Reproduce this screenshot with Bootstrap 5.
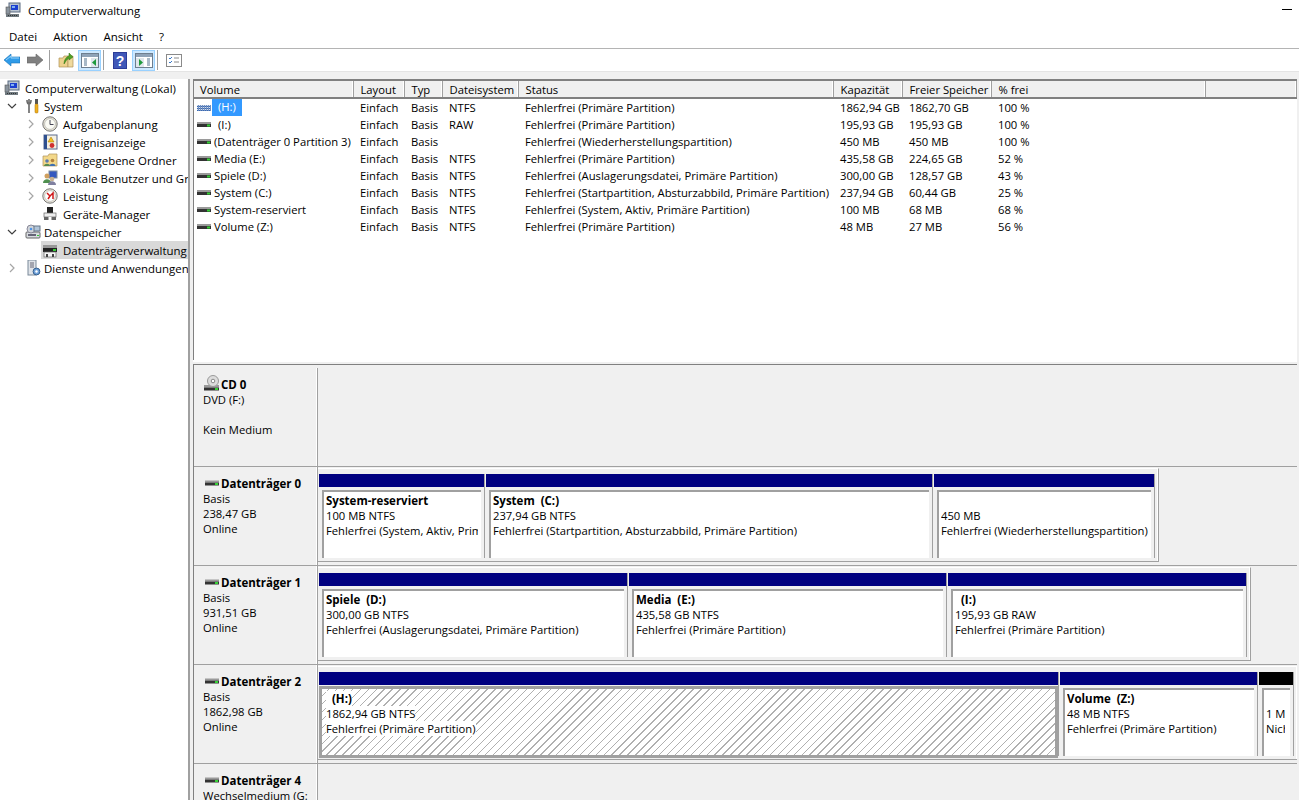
<!DOCTYPE html>
<html lang="de">
<head>
<meta charset="utf-8">
<title>Computerverwaltung</title>
<link href="https://cdn.jsdelivr.net/npm/bootstrap@5.3.0/dist/css/bootstrap.min.css" rel="stylesheet">
<style>
html,body{height:800px;overflow:hidden;background:#fff}
body{font-family:"Open Sans","Noto Sans",sans-serif;font-size:11.25px;line-height:15px;color:#000}
.mmc-title{height:22px;padding:0 7px 2px 5px;font-size:11.35px}
.mmc-title .ttl{margin-left:7px}
.mmc-min{width:10px;height:1px;background:#000;margin-top:-1px}
.mmc-menu{height:27px;border-bottom:1px solid #b4b4b4;padding-left:9px;padding-top:2px;gap:16px;font-size:11.5px}
.mmc-tools{height:22px;padding-left:4px}
.tb{width:16px;height:16px;display:block;flex:none}
.tb-on{width:23px;height:21px;flex:none;background:#cce8ff;border:1px solid #99d1ff;display:flex;align-items:center;justify-content:center}
.tb-sep{width:1px;height:20px;flex:none;background:#a0a0a0}
.g7{margin-left:7px}.g6{margin-left:6px}.g8{margin-left:8px}.g4{margin-left:4px}.g2{margin-left:2px}.g9{margin-left:9px}.g5{margin-left:5px}
.mmc-main{height:729px;background:#f0f0f0;padding-top:7px;border-top:1px solid #e4e4e4}
.tree{width:188px;flex:none;height:722px;background:#fff;overflow:hidden;font-size:11.45px}
.tree-wrap{width:190px;flex:none;border-right:2px solid #a0a0a0;margin-right:3px}
.tr{height:18px;white-space:nowrap}
.tr .chev{width:10px;height:10px;flex:none}
.l0{padding-left:4px}.l0 .tico{margin-right:5px}
.l1{padding-left:7px}.l1 .chev{margin-right:2px}.l1 .tico{margin-right:3px;margin-left:6px}
.l2{padding-left:26px}.l2 .chev{margin-right:6px}.l2 .tico{margin-right:5px}
.tico{width:16px;height:16px;flex:none}
.tsel{background:#d9d9d9;margin-left:41px;padding-left:1px}
.tsel .tico{margin-right:5px}
.rpane{width:1104px;flex:none}
.vol-pane{height:281px;background:#fff;border-top:2px solid #808080;border-left:1px solid #808080;overflow:hidden}
.vol-table{table-layout:fixed;width:1103px;border-collapse:collapse}
.vol-table th{font-weight:400;background:#f0f0f0;height:17px;padding:0 0 0 7px;border-right:1px solid #a0a0a0;box-shadow:inset -1px 0 0 #fff;border-bottom:2px solid #808080;white-space:nowrap}
.vol-table th:first-child{padding-left:6px}
.vol-table td{height:17px;padding:0 0 0 7px;white-space:nowrap;overflow:hidden}
.vol-table td.vn{padding-left:3px}
.vn-in{display:flex;align-items:center}
.vn-in svg{width:16px;height:11px;flex:none;margin-right:1px}
.hl{background:#3399ff;color:#fff;padding:0 6px;margin-left:-2px;height:17px}
.ind{padding-left:4px}
.split{height:5px;background:#f0f0f0;border-top:2px solid #fff;border-bottom:1px solid #808080}
.disks{height:436px;background:#f0f0f0;border-left:1px solid #808080;overflow:hidden;padding-top:3px}
.drow{height:99px;border-bottom:1px solid #a0a0a0;display:flex}
.dlabel{width:124px;flex:none;padding:8px 0 0 9px;border-right:1px solid #a0a0a0;box-shadow:inset -1px 0 0 #fff;white-space:nowrap}
.dclip{width:105px;overflow:hidden}
.dname{font-weight:700;display:flex;align-items:center;height:14px;margin:1px 0;font-size:11.5px}
.dname svg{width:16px;height:12px;margin-left:2px;flex:none}
.dname svg.dcd{height:16px;margin-top:-3px;margin-right:1px;margin-left:1px}
.strip{display:flex;align-self:flex-start;margin-top:1px;height:94px;padding:5px 3px 3px 1px;border-top:1px solid #fff;border-right:1px solid #a0a0a0;border-bottom:1px solid #a0a0a0;box-shadow:inset -1px 0 0 #fff}
.part{flex:none;margin-right:1px;border-right:1px solid #a0a0a0;display:flex;flex-direction:column}
.part:last-child{margin-right:0}
.pbar{height:13px;background:#000080;flex:none}
.pbar-blk{background:#000}
.pbody{margin:3px 3px 0 3px;height:68px;flex:none;background:#fff;border-top:2px solid #a0a0a0;border-left:2px solid #a0a0a0;padding:1px 0 0 2px;white-space:nowrap}
.pclip{overflow:hidden;margin-right:3px}
.pw35 .pclip{margin-right:5px}
.pclip b{display:block;font-weight:700;font-size:11.5px}
.psel{margin:1px 0 0 0;height:72px;border:3px solid #a0a0a0;padding:2px 0 0 4px;background:repeating-linear-gradient(135deg,#fff 0,#fff 4.6px,#b0b0b0 4.6px,#b0b0b0 5.6px)}
.psel span,.psel b{background:#fff}
.psel b{display:inline-block}
.pline{display:block;width:max-content}
.sp2{height:15px}
.pw166{width:166px}.pw447{width:447px}.pw221{width:221px}
.pw309{width:309px}.pw318{width:318px}.pw299{width:299px}
.pw740{width:740px}.pw198{width:198px}.pw35{width:35px}
</style>
</head>
<body>
<svg width="0" height="0" class="d-block" style="position:absolute">
<defs>
<symbol id="hdd" viewBox="0 0 16 11"><rect x="0" y="3" width="14" height="2" fill="#9a9a9a"/><rect x="0" y="5" width="14" height="3" fill="#333"/><rect x="10" y="5.500" width="3" height="2" fill="#35d135"/></symbol>
<symbol id="hddhatch" viewBox="0 0 16 11"><rect x="0" y="3" width="14" height="6" fill="#6f8fc0"/><path d="M0 3.500h14M0 5.500h14M0 7.500h14" stroke="#fff" stroke-width=".7" stroke-dasharray="1 1"/><path d="M0 4.500h14M0 6.500h14M0 8.500h14" stroke="#2a5db0" stroke-width=".8" stroke-dasharray="1 1"/></symbol>
<symbol id="comp" viewBox="0 0 16 16"><rect x="4" y="1" width="11" height="9" fill="#b9c4d0" stroke="#5a6a80"/><rect x="6" y="3" width="7" height="5" fill="#1c3fd0"/><rect x="7" y="4" width="3" height="2" fill="#7fb0f0"/><rect x="1" y="5" width="4" height="7" fill="#8a949e" stroke="#555" stroke-width=".6"/><rect x="1" y="12" width="13" height="3" fill="#707a80"/><path d="M3 13.500h9" stroke="#333" stroke-dasharray="1 1"/></symbol>
<symbol id="tools" viewBox="0 0 16 16"><path d="M4 1v4M2 2c0 3 1 4 2 4s2-1 2-4M4 6v9" stroke="#666" stroke-width="1.600" fill="none"/><rect x="10" y="1" width="3" height="5" fill="#555"/><rect x="10" y="6" width="3" height="9" rx="1" fill="#f0b020" stroke="#a87000" stroke-width=".5"/></symbol>
<symbol id="clock" viewBox="0 0 16 16"><circle cx="8" cy="8" r="7.200" fill="#e8e4d4" stroke="#777"/><circle cx="8" cy="8" r="5.400" fill="#fbfbf4" stroke="#aaa" stroke-width=".6"/><path d="M8 4v4.500h3.500" stroke="#445" stroke-width="1" fill="none"/></symbol>
<symbol id="evt" viewBox="0 0 16 16"><rect x="2" y="1" width="13" height="14" fill="#f4f0e0" stroke="#5a6a90"/><rect x="2" y="1" width="3" height="14" fill="#2f5090"/><path d="M9 3l3 5H6z" fill="#f4c020" stroke="#a07000" stroke-width=".5"/><circle cx="10" cy="11.500" r="2.400" fill="#d03030"/></symbol>
<symbol id="share" viewBox="0 0 16 16"><path d="M1 4h5l1-2h8v12H1z" fill="#f3d88a" stroke="#b0935a" stroke-width=".7"/><circle cx="5" cy="9" r="1.800" fill="#5a7ab0"/><path d="M2 14c0-3 6-3 6 0z" fill="#5a8a50"/><circle cx="10.500" cy="8.500" r="1.800" fill="#b08040"/><path d="M7.500 14c0-3 6-3 6 0z" fill="#4070b0"/></symbol>
<symbol id="users" viewBox="0 0 16 16"><rect x="7" y="1" width="8" height="7" fill="#3458c0" stroke="#8090a0"/><circle cx="5" cy="6" r="2.500" fill="#d0a060"/><path d="M1 13c0-5 8-5 8 0z" fill="#509050"/><circle cx="10" cy="9" r="2.300" fill="#c8b090"/><path d="M6 15c0-5 8-5 8 0z" fill="#8080a0"/></symbol>
<symbol id="perf" viewBox="0 0 16 16"><circle cx="8" cy="8" r="7.200" fill="#efeadb" stroke="#777"/><circle cx="8" cy="8" r="5.400" fill="#fff" stroke="#aaa" stroke-width=".6"/><path d="M5 5l3 3-2 3M8 8l3-3 0 6" stroke="#d01818" stroke-width="1.500" fill="none"/></symbol>
<symbol id="dev" viewBox="0 0 16 16"><rect x="5" y="1" width="6" height="6" fill="#222"/><rect x="2" y="7" width="12" height="4" fill="#eee" stroke="#666" stroke-width=".7"/><rect x="2" y="11" width="12" height="3" fill="#666"/><rect x="6.500" y="11" width="3" height="3" fill="#fff"/></symbol>
<symbol id="store" viewBox="0 0 16 16"><rect x="1" y="8" width="14" height="6" rx="1" fill="#d8dce0" stroke="#666"/><rect x="3" y="10" width="8" height="2" fill="#667"/><circle cx="6" cy="5" r="4" fill="#d0d4d8" stroke="#889"/><circle cx="6" cy="5" r="1.300" fill="#4e94e8"/><rect x="9" y="2" width="6" height="5" fill="#b0c4d8" stroke="#678"/><rect x="12" y="11" width="2" height="1" fill="#3c3"/></symbol>
<symbol id="svc" viewBox="0 0 16 16"><rect x="3" y="0" width="8" height="15" fill="#dfe3e8" stroke="#7a8a9a"/><path d="M5 3h4M5 5h4M5 7h4" stroke="#667"/><circle cx="11.500" cy="11.500" r="3.400" fill="#6fa0d8" stroke="#35608f"/><circle cx="11.500" cy="11.500" r="1.200" fill="#fff"/></symbol>
<symbol id="dskmgr" viewBox="0 0 16 16"><rect x="1" y="3" width="14" height="3" fill="#999"/><rect x="1" y="6" width="14" height="4" fill="#222"/><rect x="11" y="7" width="3" height="2" fill="#3c3"/><rect x="2" y="10" width="12" height="5" fill="#f4f4f4" stroke="#666" stroke-width=".7"/><rect x="4" y="12" width="2" height="3" fill="#444"/><rect x="10" y="12" width="2" height="3" fill="#444"/></symbol>
<symbol id="cd" viewBox="0 0 16 16"><rect x="0" y="10" width="15" height="2.500" fill="#9a9a9a"/><rect x="0" y="12.500" width="15" height="3" fill="#333"/><rect x="11" y="13" width="3" height="2" fill="#35d135"/><circle cx="9" cy="6" r="5.500" fill="#dcdcdc" stroke="#999"/><circle cx="9" cy="6" r="1.800" fill="#fff" stroke="#888"/></symbol>
<symbol id="chd" viewBox="0 0 10 10"><path d="M1 3l4 4 4-4" stroke="#404040" stroke-width="1.200" fill="none"/></symbol>
<symbol id="chr" viewBox="0 0 10 10"><path d="M3 1l4 4-4 4" stroke="#a6a6a6" stroke-width="1.200" fill="none"/></symbol>
<symbol id="back" viewBox="0 0 16 16"><path d="M0 8l7-6v3h9v6H7v3z" fill="#2f9be8" stroke="#1574bb" stroke-width=".6"/><path d="M2 8l5-4v2h8" fill="none" stroke="#9bd4f8" stroke-width="1"/></symbol>
<symbol id="fwd" viewBox="0 0 16 16"><path d="M16 8L9 2v3H0v6h9v3z" fill="#808080" stroke="#666" stroke-width=".6"/></symbol>
<symbol id="up" viewBox="0 0 16 16"><path d="M1 6h4l1-2h4v11H1z" fill="#edd28d" stroke="#b0935a" stroke-width=".7"/><path d="M10 4h5v11H10z" fill="#f0da9e" stroke="#b0935a" stroke-width=".7"/><path d="M6 12c0-4 2-7 5-8V1l4 4-4 3V6c-2 1-3 3-5 6z" fill="#50a028" stroke="#2f7010" stroke-width=".5"/></symbol>
<symbol id="panel-l" viewBox="0 0 18 15"><rect x=".5" y=".5" width="17" height="14" fill="#fff" stroke="#6d7e8f"/><rect x="1" y="1" width="16" height="3" fill="#8fa3b8"/><path d="M3 6h3M3 8h3M3 10h3M3 12h3" stroke="#53738f"/><rect x="10" y="5" width="7" height="9" fill="#dfe6ec"/><path d="M15 6v7l-4-3.500z" fill="#1e9a3c"/></symbol>
<symbol id="panel-r" viewBox="0 0 18 15"><rect x=".5" y=".5" width="17" height="14" fill="#fff" stroke="#6d7e8f"/><rect x="1" y="1" width="16" height="3" fill="#8fa3b8"/><path d="M12 6h3M12 8h3M12 10h3M12 12h3" stroke="#53738f"/><rect x="1" y="5" width="8" height="9" fill="#dfe6ec"/><path d="M4 6v7l4-3.500z" fill="#1e9a3c"/></symbol>
<symbol id="check" viewBox="0 0 16 13"><rect x=".5" y=".5" width="15" height="12" fill="#fff" stroke="#8a8a8a"/><path d="M3 4l1 1 2-2M3 8l1 1 2-2" stroke="#3a78c8" fill="none"/><path d="M8 4h5M8 8h5" stroke="#8a8a8a"/></symbol>
</defs>
</svg>

<div class="mmc-title d-flex align-items-center">
  <svg class="tico"><use href="#comp"/></svg><span class="ttl flex-grow-1">Computerverwaltung</span><span class="mmc-min"></span>
</div>
<div class="mmc-menu d-flex align-items-center"><span>Datei</span><span>Aktion</span><span>Ansicht</span><span>?</span></div>
<div class="mmc-tools d-flex align-items-center">
  <svg class="tb"><use href="#back"/></svg>
  <svg class="tb g7"><use href="#fwd"/></svg>
  <span class="tb-sep g6"></span>
  <svg class="tb g8"><use href="#up"/></svg>
  <span class="tb-on g4"><svg width="18" height="15"><use href="#panel-l"/></svg></span>
  <span class="tb-sep g2"></span>
  <svg width="14" height="17" class="g9 flex-none" viewBox="0 0 14 17"><rect width="14" height="17" fill="#2c3c98"/><rect x="1" y="1" width="12" height="15" fill="#4058b8"/><text x="7" y="13.500" text-anchor="middle" font-family="Liberation Sans, sans-serif" font-weight="700" font-size="14" fill="#fff">?</text></svg>
  <span class="tb-on g5"><svg width="18" height="15"><use href="#panel-r"/></svg></span>
  <span class="tb-sep g2"></span>
  <svg width="16" height="13" class="g8"><use href="#check"/></svg>
</div>
<div class="mmc-main d-flex">
  <div class="tree-wrap">
    <div class="tree">
      <div class="tr d-flex align-items-center l0"><svg class="tico"><use href="#comp"/></svg>Computerverwaltung (Lokal)</div>
      <div class="tr d-flex align-items-center l1"><svg class="chev"><use href="#chd"/></svg><svg class="tico"><use href="#tools"/></svg>System</div>
      <div class="tr d-flex align-items-center l2"><svg class="chev"><use href="#chr"/></svg><svg class="tico"><use href="#clock"/></svg>Aufgabenplanung</div>
      <div class="tr d-flex align-items-center l2"><svg class="chev"><use href="#chr"/></svg><svg class="tico"><use href="#evt"/></svg>Ereignisanzeige</div>
      <div class="tr d-flex align-items-center l2"><svg class="chev"><use href="#chr"/></svg><svg class="tico"><use href="#share"/></svg>Freigegebene Ordner</div>
      <div class="tr d-flex align-items-center l2"><svg class="chev"><use href="#chr"/></svg><svg class="tico"><use href="#users"/></svg>Lokale Benutzer und Gruppen</div>
      <div class="tr d-flex align-items-center l2"><svg class="chev"><use href="#chr"/></svg><svg class="tico"><use href="#perf"/></svg>Leistung</div>
      <div class="tr d-flex align-items-center l2"><span class="chev"></span><svg class="tico"><use href="#dev"/></svg>Geräte-Manager</div>
      <div class="tr d-flex align-items-center l1"><svg class="chev"><use href="#chd"/></svg><svg class="tico"><use href="#store"/></svg>Datenspeicher</div>
      <div class="tr d-flex align-items-center tsel"><svg class="tico"><use href="#dskmgr"/></svg>Datenträgerverwaltung</div>
      <div class="tr d-flex align-items-center l1"><svg class="chev"><use href="#chr"/></svg><svg class="tico"><use href="#svc"/></svg>Dienste und Anwendungen</div>
    </div>
  </div>
  <div class="rpane">
    <div class="vol-pane">
      <table class="vol-table">
        <colgroup><col style="width:159px"><col style="width:51px"><col style="width:38px"><col style="width:76px"><col style="width:315px"><col style="width:69px"><col style="width:89px"><col style="width:214px"><col></colgroup>
        <thead><tr><th>Volume</th><th>Layout</th><th>Typ</th><th>Dateisystem</th><th>Status</th><th>Kapazität</th><th>Freier Speicher</th><th>% frei</th><th></th></tr></thead>
        <tbody>
        <tr><td class="vn"><span class="vn-in"><svg><use href="#hddhatch"/></svg><span class="hl">(H:)</span></span></td><td>Einfach</td><td>Basis</td><td>NTFS</td><td>Fehlerfrei (Primäre Partition)</td><td>1862,94 GB</td><td>1862,70 GB</td><td>100 %</td><td></td></tr>
        <tr><td class="vn"><span class="vn-in"><svg><use href="#hdd"/></svg><span class="ind">(I:)</span></span></td><td>Einfach</td><td>Basis</td><td>RAW</td><td>Fehlerfrei (Primäre Partition)</td><td>195,93 GB</td><td>195,93 GB</td><td>100 %</td><td></td></tr>
        <tr><td class="vn"><span class="vn-in"><svg><use href="#hdd"/></svg>(Datenträger 0 Partition 3)</span></td><td>Einfach</td><td>Basis</td><td></td><td>Fehlerfrei (Wiederherstellungspartition)</td><td>450 MB</td><td>450 MB</td><td>100 %</td><td></td></tr>
        <tr><td class="vn"><span class="vn-in"><svg><use href="#hdd"/></svg>Media (E:)</span></td><td>Einfach</td><td>Basis</td><td>NTFS</td><td>Fehlerfrei (Primäre Partition)</td><td>435,58 GB</td><td>224,65 GB</td><td>52 %</td><td></td></tr>
        <tr><td class="vn"><span class="vn-in"><svg><use href="#hdd"/></svg>Spiele (D:)</span></td><td>Einfach</td><td>Basis</td><td>NTFS</td><td>Fehlerfrei (Auslagerungsdatei, Primäre Partition)</td><td>300,00 GB</td><td>128,57 GB</td><td>43 %</td><td></td></tr>
        <tr><td class="vn"><span class="vn-in"><svg><use href="#hdd"/></svg>System (C:)</span></td><td>Einfach</td><td>Basis</td><td>NTFS</td><td>Fehlerfrei (Startpartition, Absturzabbild, Primäre Partition)</td><td>237,94 GB</td><td>60,44 GB</td><td>25 %</td><td></td></tr>
        <tr><td class="vn"><span class="vn-in"><svg><use href="#hdd"/></svg>System-reserviert</span></td><td>Einfach</td><td>Basis</td><td>NTFS</td><td>Fehlerfrei (System, Aktiv, Primäre Partition)</td><td>100 MB</td><td>68 MB</td><td>68 %</td><td></td></tr>
        <tr><td class="vn"><span class="vn-in"><svg><use href="#hdd"/></svg>Volume (Z:)</span></td><td>Einfach</td><td>Basis</td><td>NTFS</td><td>Fehlerfrei (Primäre Partition)</td><td>48 MB</td><td>27 MB</td><td>56 %</td><td></td></tr>
        </tbody>
      </table>
    </div>
    <div class="split"></div>
    <div class="disks">
      <div class="drow">
        <div class="dlabel"><div class="dname"><svg class="dcd" viewBox="0 0 16 16"><use href="#cd"/></svg>CD 0</div><div>DVD (F:)</div><div class="sp2"></div><div>Kein Medium</div></div>
      </div>
      <div class="drow">
        <div class="dlabel"><div class="dname"><svg><use href="#hdd"/></svg>Datenträger 0</div><div>Basis</div><div>238,47 GB</div><div>Online</div></div>
        <div class="strip">
          <div class="part pw166"><div class="pbar"></div><div class="pbody"><div class="pclip"><b>System-reserviert</b>100 MB NTFS<br>Fehlerfrei (System, Aktiv, Primäre Partition)</div></div></div>
          <div class="part pw447"><div class="pbar"></div><div class="pbody"><div class="pclip"><b>System&nbsp; (C:)</b>237,94 GB NTFS<br>Fehlerfrei (Startpartition, Absturzabbild, Primäre Partition)</div></div></div>
          <div class="part pw221"><div class="pbar"></div><div class="pbody"><div class="pclip"><b>&nbsp;</b>450 MB<br>Fehlerfrei (Wiederherstellungspartition)</div></div></div>
        </div>
      </div>
      <div class="drow">
        <div class="dlabel"><div class="dname"><svg><use href="#hdd"/></svg>Datenträger 1</div><div>Basis</div><div>931,51 GB</div><div>Online</div></div>
        <div class="strip">
          <div class="part pw309"><div class="pbar"></div><div class="pbody"><div class="pclip"><b>Spiele&nbsp; (D:)</b>300,00 GB NTFS<br>Fehlerfrei (Auslagerungsdatei, Primäre Partition)</div></div></div>
          <div class="part pw318"><div class="pbar"></div><div class="pbody"><div class="pclip"><b>Media&nbsp; (E:)</b>435,58 GB NTFS<br>Fehlerfrei (Primäre Partition)</div></div></div>
          <div class="part pw299"><div class="pbar"></div><div class="pbody"><div class="pclip"><b>&nbsp;&nbsp;(I:)</b>195,93 GB RAW<br>Fehlerfrei (Primäre Partition)</div></div></div>
        </div>
      </div>
      <div class="drow">
        <div class="dlabel"><div class="dname"><svg><use href="#hdd"/></svg>Datenträger 2</div><div>Basis</div><div>1862,98 GB</div><div>Online</div></div>
        <div class="strip">
          <div class="part pw740"><div class="pbar"></div><div class="pbody psel"><div class="pclip"><b>&nbsp;&nbsp;(H:)</b><span class="pline">1862,94 GB NTFS</span><span class="pline">Fehlerfrei (Primäre Partition)</span></div></div></div>
          <div class="part pw198"><div class="pbar"></div><div class="pbody"><div class="pclip"><b>Volume&nbsp; (Z:)</b>48 MB NTFS<br>Fehlerfrei (Primäre Partition)</div></div></div>
          <div class="part pw35"><div class="pbar pbar-blk"></div><div class="pbody"><div class="pclip"><b>&nbsp;</b>1 MB<br>Nicht zugeordnet</div></div></div>
        </div>
      </div>
      <div class="drow border-0">
        <div class="dlabel"><div class="dname"><svg><use href="#hdd"/></svg>Datenträger 4</div><div class="dclip">Wechselmedium (G:)</div></div>
      </div>
    </div>
  </div>
</div>
<script src="https://cdn.jsdelivr.net/npm/bootstrap@5.3.0/dist/js/bootstrap.bundle.min.js"></script>
</body>
</html>
